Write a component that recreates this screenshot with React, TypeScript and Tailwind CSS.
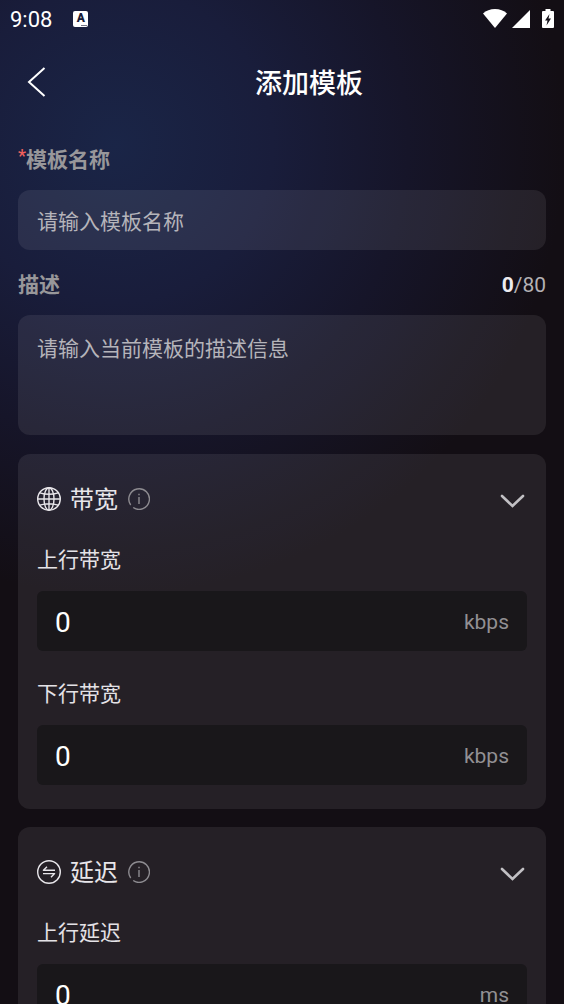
import { useId, useState } from "react";

interface IField {
    label: string;
    unit: string;
}

interface ISection {
    title: string;
    icon: React.ReactNode;
    fields: IField[];
}

const GlobeIcon = () => (
    <svg className="size-6 shrink-0" viewBox="0 0 24 24" fill="none" stroke="currentColor" strokeWidth="1.4" aria-hidden="true">
        <circle cx="12" cy="12" r="11.3" />
        <ellipse cx="12" cy="12" rx="5" ry="11.3" />
        <path d="M12 0.7V23.3M0.7 12H23.3M2.8 5.8Q12 8.8 21.2 5.8M2.8 18.2Q12 15.2 21.2 18.2" />
    </svg>
);

const SwapIcon = () => (
    <svg className="size-6 shrink-0" viewBox="0 0 24 24" fill="none" stroke="currentColor" strokeWidth="1.4" aria-hidden="true">
        <circle cx="12" cy="12" r="11.3" />
        <path d="M18 10.2H6.4L10 6.8M6 13.6H17.6L14 17.2" strokeLinejoin="round" />
    </svg>
);

const InfoIcon = () => (
    <svg className="size-[22px]" viewBox="0 0 22 22" fill="none" stroke="currentColor" strokeWidth="1.4" aria-hidden="true">
        <path d="M2.7 17A10.3 10.3 0 1 1 5.2 19.5" />
        <path d="M11 9V16M11 5.8V7.2" />
    </svg>
);

const StatusBar = () => (
    <div className="flex h-[38px] shrink-0 items-center px-[10px]">
        <span className="pt-0.5 text-[22px] leading-[38px]">9:08</span>
        <span className="relative ml-[21px] flex h-4 w-[15px] justify-center rounded-[2px] bg-white text-[12px] leading-[14px] font-black text-[#191c38]">
            A
            <span className="absolute right-px bottom-px h-px w-[6px] bg-[#191c38]/60" />
        </span>
        <div className="ml-auto flex items-center">
            <svg className="h-5 w-6" viewBox="0 0 24 20" fill="white" aria-hidden="true">
                <path d="M12 19L0 4.500C3 1.500 7.300 0 12 0S21 1.500 24 4.500Z" />
            </svg>
            <svg className="ml-[5px] h-5 w-[18px]" viewBox="0 0 18 20" fill="white" aria-hidden="true">
                <path d="M18 1V19H0Z" />
            </svg>
            <svg className="ml-3 h-5 w-3" viewBox="0 0 12 20" aria-hidden="true">
                <path d="M3.500 0H8.500V2H11Q12 2 12 3V18Q12 19 11 19H1Q0 19 0 18V3Q0 2 1 2H3.500Z" fill="white" />
                <path d="M7.500 5L3 11.500H5.500L4.500 16.500L9 9.500H6.500Z" fill="#130f17" />
            </svg>
        </div>
    </div>
);

const NumberField = ({ label, unit }: IField) => {
    const id = useId();
    const [value, setValue] = useState("0");

    return (
        <div className="mt-[27px]">
            <label htmlFor={id} className="block text-[21px] leading-8 text-[#e4e2e6]">
                {label}
            </label>
            <div className="mt-[15px] flex h-[60px] items-center rounded-md bg-[#19171a] px-[18px] pt-1">
                <input
                    id={id}
                    type="text"
                    inputMode="numeric"
                    value={value}
                    onChange={(e) => setValue(e.target.value)}
                    className="min-w-0 flex-1 bg-transparent text-[28px] text-white outline-none"
                />
                <span className="text-[21px] text-[#929093]">{unit}</span>
            </div>
        </div>
    );
};

const SectionCard = ({ title, icon, fields }: ISection) => {
    const [open, setOpen] = useState(true);

    return (
        <section className="rounded-xl bg-white/8 px-[19px] pt-[27px] pb-6">
            <div className="flex h-9 items-center text-[#e8e6ea]">
                {icon}
                <h2 className="ml-[9px] pt-0.5 text-[24px] leading-9">{title}</h2>
                <button type="button" aria-label={`${title}说明`} className="ml-[10px] text-[#8d8b90]">
                    <InfoIcon />
                </button>
                <button
                    type="button"
                    aria-label={title}
                    aria-expanded={open}
                    onClick={() => setOpen(!open)}
                    className="ml-auto text-[#c2c0c4]"
                >
                    <svg className="size-[30px]" viewBox="0 0 30 30" fill="none" stroke="currentColor" strokeWidth="2.600" strokeLinecap="round" aria-hidden="true">
                        <path d="M5 12L15.500 22L26 12" />
                    </svg>
                </button>
            </div>
            {open && fields.map((field) => <NumberField key={field.label} {...field} />)}
        </section>
    );
};

const sections: ISection[] = [
    {
        title: "带宽",
        icon: <GlobeIcon />,
        fields: [
            { label: "上行带宽", unit: "kbps" },
            { label: "下行带宽", unit: "kbps" },
        ],
    },
    {
        title: "延迟",
        icon: <SwapIcon />,
        fields: [
            { label: "上行延迟", unit: "ms" },
            { label: "下行延迟", unit: "ms" },
        ],
    },
];

const App = () => {
    const [name, setName] = useState("");
    const [description, setDescription] = useState("");

    return (
        <div className="flex h-screen flex-col overflow-hidden bg-[#130e14] bg-[radial-gradient(circle_450px_at_115px_145px,#1a2547_0%,#191d3b_35%,#161529_65%,#130e14_100%)] font-['Roboto','Noto_Sans_CJK_SC',sans-serif] text-white">
            <StatusBar />
            <header className="flex h-[88px] shrink-0 items-center">
                <button type="button" aria-label="返回" className="flex w-[54px] justify-end pr-2">
                    <svg className="h-[30px] w-5" viewBox="0 0 20 30" fill="none" stroke="white" strokeWidth="2" aria-hidden="true">
                        <path d="M18.500 1L3 15L18.500 29" />
                    </svg>
                </button>
                <h1 className="flex-1 pt-1 text-center text-[27px] leading-10 font-medium">添加模板</h1>
            </header>

            <main className="min-h-0 flex-1 overflow-y-auto px-[18px] pt-[18px] pb-6 [scrollbar-width:none]">
                <label htmlFor="name" className="flex text-[21px] leading-8 font-bold text-[#98979a]">
                    <span className="text-[18px] leading-6 font-medium text-[#f0605c]">*</span>
                    模板名称
                </label>
                <input
                    id="name"
                    type="text"
                    value={name}
                    onChange={(e) => setName(e.target.value)}
                    placeholder="请输入模板名称"
                    className="mt-[14px] block h-[60px] w-full rounded-xl bg-white/8 px-[19px] pt-1 text-[21px] outline-none placeholder:text-[#b5b4ba]"
                />

                <div className="mt-[19px] flex items-center justify-between text-[21px] leading-8">
                    <label htmlFor="description" className="font-bold text-[#98979a]">
                        描述
                    </label>
                    <span className="text-[#b3b1b5]">
                        <span className="font-bold text-[#eeecf0]">{description.length}</span>/80
                    </span>
                </div>
                <textarea
                    id="description"
                    maxLength={80}
                    value={description}
                    onChange={(e) => setDescription(e.target.value)}
                    placeholder="请输入当前模板的描述信息"
                    className="mt-[14px] block h-[120px] w-full resize-none rounded-xl bg-white/8 px-[19px] py-[18px] text-[21px] leading-8 outline-none placeholder:text-[#b5b4ba]"
                />

                <div className="mt-[19px] flex flex-col gap-[18px]">
                    {sections.map((section) => (
                        <SectionCard key={section.title} {...section} />
                    ))}
                </div>
            </main>
        </div>
    );
};

export default App;
